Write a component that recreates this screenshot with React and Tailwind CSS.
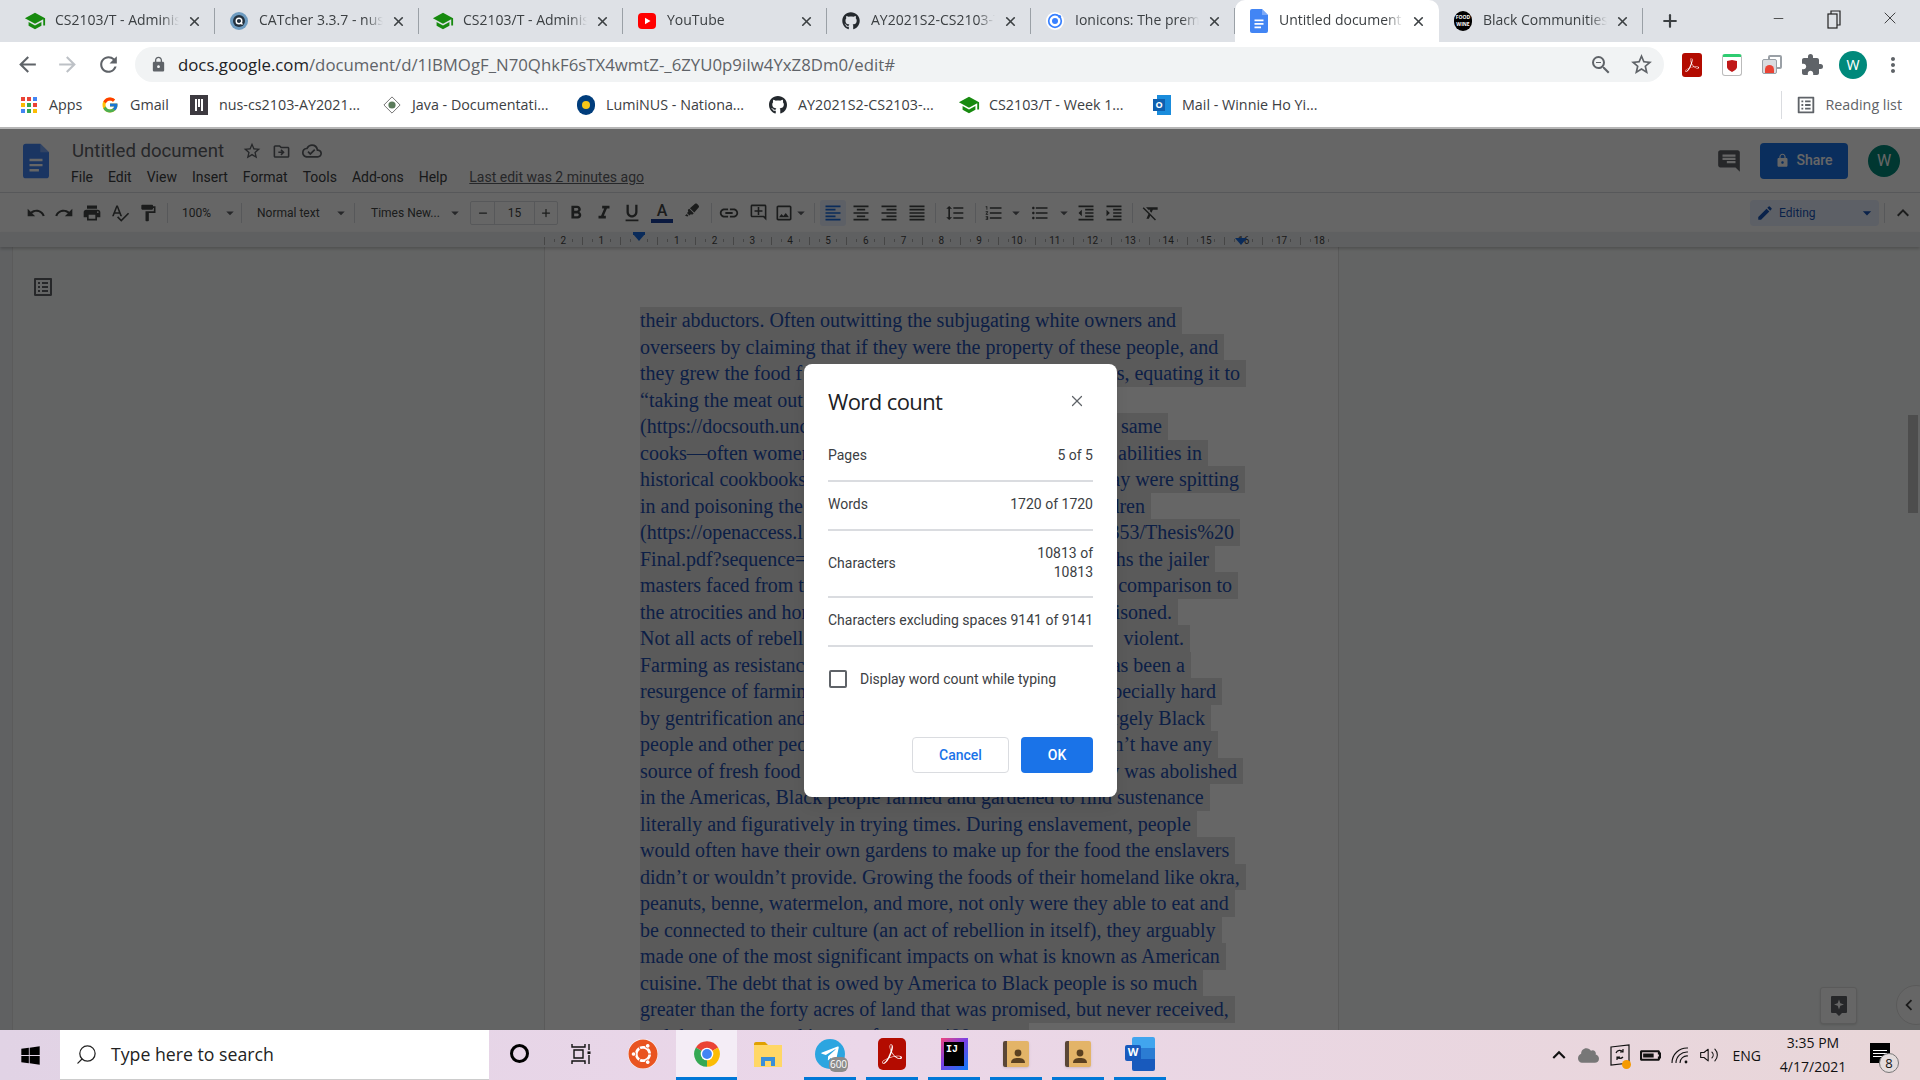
import { X, Plus, Minus, Search } from 'lucide-react'
import {
  MdArrowBack, MdArrowForward, MdRefresh, MdLock, MdZoomOut, MdStarBorder, MdExtension, MdMoreVert,
  MdUndo, MdRedo, MdPrint, MdSpellcheck, MdFormatPaint, MdFormatBold, MdFormatItalic, MdFormatUnderlined,
  MdInsertLink, MdOutlineAddComment, MdOutlineImage, MdFormatAlignLeft, MdFormatAlignCenter,
  MdFormatAlignRight, MdFormatAlignJustify, MdFormatLineSpacing, MdFormatListNumbered, MdFormatListBulleted,
  MdFormatIndentDecrease, MdFormatIndentIncrease, MdFormatClear, MdEdit, MdKeyboardArrowUp, MdKeyboardArrowLeft,
  MdChat, MdOutlineDriveFileMove, MdOutlineCloudDone, MdOutlineListAlt, MdSchool, MdArrowDropDown,
} from 'react-icons/md'
import { FaGithub, FaWindows, FaUbuntu, FaTelegramPlane, FaCloud, FaBatteryThreeQuarters, FaHighlighter } from 'react-icons/fa'
import { FcGoogle } from 'react-icons/fc'
import { SiAdobeacrobatreader } from 'react-icons/si'
import { FiVolume2 } from 'react-icons/fi'

const sans = "font-['Open_Sans',sans-serif]"
const roboto = "font-['Roboto',sans-serif]"

function DocsIcon({ className = 'w-[18px] h-[24px]', color = '#4285f4' }) {
  return (
    <svg viewBox="0 0 18 24" className={className}>
      <path d="M2 0h10l6 6v16a2 2 0 0 1-2 2H2a2 2 0 0 1-2-2V2a2 2 0 0 1 2-2z" fill={color} />
      <path d="M12 0l6 6h-6z" fill="#a1c2fa" opacity="0.6" />
      <path d="M4.5 10.5h9v1.7h-9zM4.5 14h9v1.7h-9zM4.5 17.5h6.5v1.7H4.5z" fill="#fff" />
    </svg>
  )
}

function Cap() {
  return <MdSchool size={22} className="text-[#178a0f] -mx-[2px]" />
}

function CatcherIcon() {
  return (
    <svg viewBox="0 0 18 18" className="w-[18px] h-[18px]">
      <circle cx="9" cy="9" r="9" fill="#6d9bc0" />
      <circle cx="9" cy="9" r="6" fill="#24323f" />
      <circle cx="9" cy="9" r="2.8" fill="none" stroke="#fff" strokeWidth="1.4" />
      <path d="M10.5 10.5l2 2" stroke="#fff" strokeWidth="1.4" />
    </svg>
  )
}

function YoutubeIcon() {
  return (
    <svg viewBox="0 0 18 18" className="w-[18px] h-[18px]">
      <rect x="0" y="1" width="18" height="16" rx="4" fill="#f00" />
      <path d="M7 5.7v6.6L12.5 9z" fill="#fff" />
    </svg>
  )
}

function IonIcon() {
  return (
    <svg viewBox="0 0 18 18" className="w-[18px] h-[18px]">
      <circle cx="9" cy="9" r="9" fill="#fff" />
      <circle cx="9" cy="9" r="6.3" fill="none" stroke="#3880ff" strokeWidth="1.7" />
      <circle cx="9" cy="9" r="3" fill="#3880ff" />
      <circle cx="13.6" cy="4.4" r="1.5" fill="#3880ff" />
    </svg>
  )
}

function BlackIcon() {
  return (
    <div className="w-[20px] h-[20px] rounded-full bg-black flex items-center justify-center text-white text-[5px] leading-[7px] font-bold text-center">
      FOOD<br />WINE
    </div>
  )
}

const tabs = [
  { icon: <Cap />, title: 'CS2103/T - Administrator' },
  { icon: <CatcherIcon />, title: 'CATcher 3.3.7 - nus-cs2103' },
  { icon: <Cap />, title: 'CS2103/T - Administrator' },
  { icon: <YoutubeIcon />, title: 'YouTube' },
  { icon: <FaGithub size={18} className="text-[#24292e]" />, title: 'AY2021S2-CS2103-T1' },
  { icon: <IonIcon />, title: 'Ionicons: The premium icon' },
  { icon: <DocsIcon />, title: 'Untitled document - Google', active: true },
  { icon: <BlackIcon />, title: 'Black Communities and Food' },
]

function Tab({ icon, title, active }) {
  return (
    <div className={`w-[204px] h-[42px] flex items-center pl-[15px] flex-none ${active ? 'bg-white rounded-t-[10px]' : ''}`}>
      <div className="w-[18px] flex justify-center flex-none">{icon}</div>
      <div className="ml-[11px] w-[124px] overflow-hidden whitespace-nowrap text-[14px] leading-[20px] -mt-[2px] text-[#3c4043] [mask-image:linear-gradient(to_right,black_86%,transparent)]">
        {title}
      </div>
      <X size={15} strokeWidth={2.6} className="ml-[8px] flex-none text-[#3c4043]" />
      {!active && <div className="ml-auto w-px h-[26px] bg-[#9aa0a6]" />}
    </div>
  )
}

function TabBar() {
  return (
    <div className={`h-[42px] bg-[#dee1e6] flex items-center pl-[11px] flex-none ${sans}`}>
      {tabs.map((t, i) => <Tab key={i} {...t} />)}
      <Plus size={20} strokeWidth={2.6} className="ml-[17px] text-[#3c4043]" />
      <div className="ml-auto flex items-center pr-[2px] text-[#222]">
        <div className="w-[56px] flex justify-center -mt-[6px]"><Minus size={15} strokeWidth={1.2} /></div>
        <div className="w-[56px] flex justify-center -mt-[4px]">
          <svg viewBox="0 0 14 19" className="w-[14px] h-[19px]" fill="none" stroke="#222" strokeWidth="1.2">
            <rect x="1" y="4" width="9" height="14" />
            <path d="M4 4V1h9v14h-3" />
          </svg>
        </div>
        <div className="w-[56px] flex justify-center -mt-[6px]"><X size={20} strokeWidth={1} /></div>
      </div>
    </div>
  )
}

function AddressBar() {
  return (
    <div className="h-[42px] pt-[3px] bg-white flex items-center flex-none">
      <div className="w-[54px] flex justify-end pr-[14px]"><MdArrowBack size={25} className="text-[#5f6368]" /></div>
      <div className="w-[27px] flex justify-center"><MdArrowForward size={25} className="text-[#bdc1c6]" /></div>
      <div className="w-[54px] flex justify-center"><MdRefresh size={25} className="text-[#5f6368]" /></div>
      <div className={`w-[1529px] h-[35px] rounded-full bg-[#f1f3f4] flex items-center pl-[15px] pr-[10px] ${sans}`}>
        <MdLock size={17} className="text-[#5f6368] flex-none" />
        <div className="ml-[11px] text-[16.8px] whitespace-nowrap text-[#5f6368]">
          <span className="text-[#202124]">docs.google.com</span>/document/d/1IBMOgF_N70QhkF6sTX4wmtZ-_6ZYU0p9iIw4YxZ8Dm0/edit#
        </div>
        <MdZoomOut size={24} className="ml-auto text-[#5f6368]" />
        <MdStarBorder size={25} className="ml-[16px] text-[#5f6368]" />
      </div>
      <div className="ml-[18px] w-[20px] h-[24px] bg-[#b30b00] rounded-[3px] flex items-center justify-center">
        <SiAdobeacrobatreader size={14} className="text-white" />
      </div>
      <div className="ml-[20px] w-[20px] h-[22px] rounded-[3px] border border-[#bbb] border-t-[3px] border-t-[#2ecc71] flex items-center justify-center">
        <svg viewBox="0 0 10 12" className="w-[10px] h-[12px]"><path d="M0 1l5-1 5 1v6c0 2-3 4-5 5-2-1-5-3-5-5z" fill="#c01818" /></svg>
      </div>
      <div className="ml-[20px] w-[20px] h-[20px] relative">
        <div className="w-[14px] h-[14px] ml-[6px] rounded-[2px] border-2 border-[#9aa0a6]" />
        <div className="absolute left-0 top-[4px] w-[15px] h-[15px] rounded-[2px] bg-[#dadce0] border border-[#9aa0a6]" />
        <div className="absolute left-[3px] top-[10px] w-[9px] h-[8px] rounded-t-full bg-[#ea4335]" />
      </div>
      <MdExtension size={24} className="ml-[18px] text-[#5f6368]" />
      <div className="ml-[15px] w-[28px] h-[28px] rounded-full bg-[#00897b] text-white flex items-center justify-center text-[14px]">W</div>
      <MdMoreVert size={24} className="ml-[14px] text-[#5f6368]" />
    </div>
  )
}

function AppsGrid() {
  const colors = ['#ea4335', '#ea4335', '#4285f4', '#fbbc05', '#34a853', '#ea4335', '#4285f4', '#34a853', '#fbbc05']
  return (
    <div className="grid grid-cols-3 gap-[2px] w-[16px] h-[16px] mx-px">
      {colors.map((c, i) => <div key={i} className="w-[4px] h-[4px]" style={{ background: c }} />)}
    </div>
  )
}

function OutlookIcon() {
  return (
    <div className="w-[20px] h-[20px] relative">
      <div className="absolute right-0 top-0 w-[14px] h-[20px] bg-[#1a8cdc]" />
      <div className="absolute left-0 top-[4px] w-[12px] h-[12px] bg-[#0f5fae] text-white text-[9px] font-bold flex items-center justify-center">O</div>
    </div>
  )
}

const bookmarks = [
  { w: 'w-[81px]', icon: <AppsGrid />, text: 'Apps' },
  { w: 'w-[89px]', icon: <FcGoogle size={18} />, text: 'Gmail' },
  { w: 'w-[193px]', icon: <div className="w-[20px] h-[20px] bg-[#3d3a40] flex items-start justify-center gap-px pt-[4px]"><div className="w-[2px] h-[12px] bg-white" /><div className="w-[2px] h-[8px] bg-white" /><div className="w-[2px] h-[12px] bg-white" /></div>, text: 'nus-cs2103-AY2021...' },
  { w: 'w-[194px]', icon: <svg viewBox="0 0 20 20" className="w-[20px] h-[20px]"><path d="M10 1l9 9-9 9-9-9z" fill="#fff" stroke="#666" /><circle cx="10" cy="10" r="4" fill="#5a7a5a" /></svg>, text: 'Java - Documentati...' },
  { w: 'w-[192px]', icon: <div className="w-[20px] h-[20px] rounded-full bg-[#003d7c] flex items-center justify-center"><div className="w-[8px] h-[8px] rounded-full bg-[#f5c518]" /></div>, text: 'LumiNUS - Nationa...' },
  { w: 'w-[191px]', icon: <FaGithub size={20} className="text-[#24292e]" />, text: 'AY2021S2-CS2103-...' },
  { w: 'w-[193px]', icon: <Cap />, text: 'CS2103/T - Week 1...' },
  { w: 'w-[200px]', icon: <OutlookIcon />, text: 'Mail - Winnie Ho Yi...' },
]

function BookmarkBar() {
  return (
    <div className={`h-[45px] bg-white flex items-center pl-[20px] flex-none border-b-2 border-[#b5b5b5] pb-[2px] ${sans}`}>
      {bookmarks.map((b, i) => (
        <div key={i} className={`${b.w} flex items-center gap-[11px] flex-none text-[14.3px] text-[#3c4043] whitespace-nowrap`}>
          <div className="w-[18px] flex justify-center flex-none">{b.icon}</div>
          {b.text}
        </div>
      ))}
      <div className="ml-auto flex items-center pr-[18px] text-[14.3px] text-[#5f6368]">
        <div className="w-px h-[28px] bg-[#dadce0] mr-[13px]" />
        <MdOutlineListAlt size={22} className="mr-[8px]" />
        Reading list
      </div>
    </div>
  )
}

function Tb({ icon: Icon, size = 20, className = 'ml-0', iconClass = 'text-[#444746]' }) {
  return (
    <div className={`w-[28px] h-[26px] flex items-center justify-center flex-none ${className}`}>
      <Icon size={size} className={iconClass} />
    </div>
  )
}

const Sep = ({ className = '' }) => <div className={`w-px h-[20px] bg-[#dadce0] flex-none ${className}`} />
const Caret = ({ className = '' }) => <MdArrowDropDown size={18} className={`text-[#5f6368] flex-none ${className}`} />

function DocsHeader() {
  return (
    <div className={`h-[64px] bg-white border-b border-[#dadce0] flex items-start flex-none relative ${roboto}`}>
      <div className="pl-[23px] pt-[14px]"><DocsIcon className="w-[26px] h-[36px]" color="#4285f4" /></div>
      <div className="pl-[23px] pt-[9px]">
        <div className="flex items-center h-[26px]">
          <span className="text-[18.6px] text-[#5f6368] leading-none">Untitled document</span>
          <MdStarBorder size={20} className="ml-[18px] text-[#5f6368]" />
          <MdOutlineDriveFileMove size={19} className="ml-[10px] text-[#5f6368]" />
          <MdOutlineCloudDone size={20} className="ml-[11px] text-[#5f6368]" />
        </div>
        <div className="flex items-center h-[26px] text-[14px] text-[#3c4043] whitespace-nowrap">
          <span className="-ml-px">File</span>
          <span className="ml-[15px]">Edit</span>
          <span className="ml-[15px]">View</span>
          <span className="ml-[15px]">Insert</span>
          <span className="ml-[15px]">Format</span>
          <span className="ml-[15px]">Tools</span>
          <span className="ml-[15px]">Add-ons</span>
          <span className="ml-[15px]">Help</span>
          <span className="ml-[22px] underline text-[#5f6368]">Last edit was 2 minutes ago</span>
        </div>
      </div>
      <div className="ml-auto flex items-center h-full pr-[20px]">
        <MdChat size={26} className="text-[#5f6368] mr-[18px] -scale-x-100" />
        <div className="w-[88px] h-[36px] rounded-[4px] bg-[#1a73e8] text-white flex items-center justify-center gap-[6px] text-[14px] font-medium">
          <MdLock size={15} />Share
        </div>
        <div className="ml-[20px] w-[32px] h-[32px] rounded-full bg-[#00897b] text-white flex items-center justify-center text-[16px]">W</div>
      </div>
    </div>
  )
}

function DocsToolbar() {
  return (
    <div className={`h-[39px] bg-white flex items-center pl-[22px] flex-none text-[12px] text-[#444746] whitespace-nowrap ${roboto}`}>
      <Tb icon={MdUndo} /><Tb icon={MdRedo} /><Tb icon={MdPrint} /><Tb icon={MdSpellcheck} /><Tb icon={MdFormatPaint} />
      <Sep className="ml-[5px]" />
      <div className="w-[73px] flex items-center pl-[14px] flex-none">100%<Caret className="ml-[10px]" /></div>
      <Sep />
      <div className="w-[112px] flex items-center pl-[15px] flex-none">Normal text<Caret className="ml-[12px]" /></div>
      <Sep />
      <div className="w-[115px] flex items-center pl-[16px] flex-none">Times New...<Caret className="ml-[6px]" /></div>
      <div className="w-[88px] h-[24px] border border-[#dadce0] rounded-[2px] flex items-center flex-none">
        <div className="w-[23px] flex justify-center"><Minus size={12} strokeWidth={2.5} /></div>
        <div className="w-[41px] h-full border-x border-[#dadce0] flex items-center justify-center">15</div>
        <div className="flex-1 flex justify-center"><Plus size={12} strokeWidth={2.5} /></div>
      </div>
      <Tb icon={MdFormatBold} size={22} className="ml-[4px]" />
      <Tb icon={MdFormatItalic} size={22} />
      <Tb icon={MdFormatUnderlined} size={22} />
      <div className="ml-[2px] w-[28px] h-[26px] flex flex-col items-center justify-center flex-none">
        <span className="text-[16px] leading-[17px] font-medium">A</span>
        <div className="w-[22px] h-[4px] bg-[#1a3f9e]" />
      </div>
      <Tb icon={FaHighlighter} size={14} className="ml-[2px] -mt-[6px]" />
      <Sep className="ml-[5px]" />
      <Tb icon={MdInsertLink} size={22} className="ml-[3px]" />
      <Tb icon={MdOutlineAddComment} size={19} className="ml-px" />
      <div className="w-[24px] flex justify-center flex-none"><MdOutlineImage size={20} /></div>
      <Caret className="-mx-[4px]" />
      <Sep className="ml-[8px]" />
      <div className="ml-[5px] w-[26px] h-[26px] rounded-[3px] bg-[#e8f0fe] flex items-center justify-center flex-none"><MdFormatAlignLeft size={20} className="text-[#1a6be0]" /></div>
      <Tb icon={MdFormatAlignCenter} className="ml-px" /><Tb icon={MdFormatAlignRight} /><Tb icon={MdFormatAlignJustify} />
      <Sep className="ml-[4px]" />
      <Tb icon={MdFormatLineSpacing} className="ml-[5px]" />
      <Sep className="ml-[6px]" />
      <Tb icon={MdFormatListNumbered} className="ml-[4px]" /><Caret className="-ml-[1px]" />
      <Tb icon={MdFormatListBulleted} className="ml-[1px]" /><Caret className="ml-[1px]" />
      <Tb icon={MdFormatIndentDecrease} className="-ml-[1px]" /><Tb icon={MdFormatIndentIncrease} />
      <Sep className="ml-[4px]" />
      <Tb icon={MdFormatClear} className="ml-[4px]" />
      <div className="ml-auto flex items-center pr-[4px]">
        <div className="w-[129px] h-[26px] rounded-[4px] bg-[#e8f0fe] flex items-center pl-[6px] pr-[2px] text-[#1a56b8]">
          <MdEdit size={18} /><span className="ml-[5px]">Editing</span>
          <MdArrowDropDown size={20} className="ml-auto" />
        </div>
        <Sep className="ml-[5px]" />
        <MdKeyboardArrowUp size={24} className="ml-[6px] mr-[1px]" />
      </div>
    </div>
  )
}

const rulerNums = ['2', '1', '', '1', '2', '3', '4', '5', '6', '7', '8', '9', '10', '11', '12', '13', '14', '15', '16', '17', '18']

function Ruler() {
  return (
    <div className={`h-[15px] pt-[2px] bg-[#eef0f3] flex-none pl-[544px] flex items-center relative shadow-[0_2px_3px_rgba(0,0,0,0.2)] z-10 ${roboto}`}>
      {rulerNums.map((n, i) => (
        <div key={i} className="w-[37.8px] flex-none flex items-center justify-between text-[10px] text-[#444] leading-none border-l border-[#b0b0b0] h-[8px]">
          <div className="w-px h-[3px] bg-[#b0b0b0] ml-[9px]" />
          <span>{n}</span>
          <div className="w-px h-[3px] bg-[#b0b0b0] mr-[9px]" />
        </div>
      ))}
      <div className="absolute left-[633px] top-[2px] w-0 h-0 border-x-[6px] border-x-transparent border-t-[7px] border-t-[#1a6be0]" />
      <div className="absolute left-[633px] top-0 w-[12px] h-[3px] bg-[#1a6be0]" />
      <div className="absolute left-[1235px] top-[6px] w-0 h-0 border-x-[6px] border-x-transparent border-t-[7px] border-t-[#1a6be0]" />
    </div>
  )
}

const lines = [
  { t: 'their abductors. Often outwitting the subjugating white owners and' },
  { t: 'overseers by claiming that if they were the property of these people, and' },
  { t: 'they grew the food f', r: 's, equating it to', w: 606 },
  { t: '“taking the meat out', r: '', w: 300 },
  { t: '(https://docsouth.unc', r: 'same', w: 528 },
  { t: 'cooks—often women', r: 'abilities in', w: 568 },
  { t: 'historical cookbooks', r: 'ay were spitting', w: 605 },
  { t: 'in and poisoning the', r: 'dren', w: 511 },
  { t: '(https://openaccess.l', r: '353/Thesis%20', w: 600 },
  { t: 'Final.pdf?sequence=', r: 'hs the jailer', w: 575 },
  { t: 'masters faced from t', r: 'comparison to', w: 598 },
  { t: 'the atrocities and hor', r: 'isoned.', w: 538 },
  { t: 'Not all acts of rebell', r: 'violent.', w: 550 },
  { t: 'Farming as resistanc', r: 'as been a', w: 551 },
  { t: 'resurgence of farmin', r: 'pecially hard', w: 582 },
  { t: 'by gentrification and', r: 'rgely Black', w: 571 },
  { t: 'people and other peo', r: 'n’t have any', w: 578 },
  { t: 'source of fresh food', r: 'y was abolished', w: 603 },
  { t: 'in the Americas, Black people farmed and gardened to find sustenance' },
  { t: 'literally and figuratively in trying times. During enslavement, people' },
  { t: 'would often have their own gardens to make up for the food the enslavers' },
  { t: 'didn’t or wouldn’t provide. Growing the foods of their homeland like okra,' },
  { t: 'peanuts, benne, watermelon, and more, not only were they able to eat and' },
  { t: 'be connected to their culture (an act of rebellion in itself), they arguably' },
  { t: 'made one of the most significant impacts on what is known as American' },
  { t: 'cuisine. The debt that is owed by America to Black people is so much' },
  { t: 'greater than the forty acres of land that was promised, but never received,' },
  { t: 'and that has accrued interest for over 400 years.' },
]

function Canvas() {
  return (
    <div className="flex-1 min-h-0 flex bg-[#f8fbfa] overflow-hidden relative">
      <div className="w-[13px] flex-none bg-[#eff2f6] border-r border-[#e4e4e4]" />
      <div className="w-[531px] flex-none pt-[28px] pl-[18px]">
        <MdOutlineListAlt size={24} className="text-[#5f6368]" />
      </div>
      <div className="w-[795px] flex-none bg-white border-x border-[#e0e0e0] pl-[95px] pt-[60px] font-['Liberation_Serif',serif] text-[20px] leading-[26.5px] text-[#1f4fb0] whitespace-nowrap">
        {lines.map((l, i) => (
          <div key={i} className="h-[26.5px]">
            {l.r === undefined ? (
              <span className="inline-block bg-[#e0e0e0] pr-[6px] h-[26.5px]">{l.t}</span>
            ) : (
              <span className="inline-flex justify-between bg-[#e0e0e0] pr-[6px] h-[26.5px]" style={{ width: l.w }}>
                <span>{l.t}</span><span>{l.r}</span>
              </span>
            )}
          </div>
        ))}
      </div>
      <div className="absolute right-[2px] top-[168px] w-[10px] h-[98px] bg-[#c1c1c1]" />
      <div className="absolute left-[1820px] top-[740px] w-[37px] h-[37px] rounded-[3px] border border-[#e0e0e0] bg-white shadow-sm flex items-center justify-center">
        <svg viewBox="0 0 18 22" className="w-[18px] h-[22px]">
          <path d="M2 1h14a1 1 0 0 1 1 1v15a1 1 0 0 1-1 1h-4l-3 3-3-3H2a1 1 0 0 1-1-1V2a1 1 0 0 1 1-1z" fill="#5f6368" />
          <path d="M9 4.5l1.3 3.7L14 9.5l-3.7 1.3L9 14.5l-1.3-3.7L4 9.5l3.7-1.3z" fill="#fff" />
        </svg>
      </div>
      <div className="absolute left-[1896px] top-[738px] w-[40px] h-[40px] rounded-full bg-white border border-[#e0e0e0] flex items-center pl-[1px]">
        <MdKeyboardArrowLeft size={22} className="text-[#444]" />
      </div>
    </div>
  )
}

function CountRow({ label, children, pb = 'pb-[15px]' }) {
  return (
    <div className={`flex items-center justify-between pt-[13px] ${pb} border-b-2 border-[#dadce0] leading-[19px] whitespace-nowrap`}>
      <span>{label}</span>
      {children}
    </div>
  )
}

function WordCountDialog() {
  return (
    <div className={`absolute left-[804px] top-[235px] w-[313px] h-[433px] bg-white rounded-[8px] px-[24px] pt-[24px] text-[14px] text-[#3c4043] shadow-lg ${roboto}`}>
      <div className="flex items-center justify-between h-[28px] mb-[17px]">
        <span className="text-[22px] text-[#202124] font-['Open_Sans',sans-serif] tracking-[-0.6px] -mt-[2px]">Word count</span>
        <X size={18} strokeWidth={1.6} className="text-[#5f6368] mr-[7px] -mt-[2px]" />
      </div>
      <CountRow label="Pages"><span>5 of 5</span></CountRow>
      <CountRow label="Words"><span>1720 of 1720</span></CountRow>
      <CountRow label="Characters" pb="pb-[14px]"><span className="w-[70px] text-right whitespace-normal">10813 of 10813</span></CountRow>
      <CountRow label="Characters excluding spaces 9141 of 9141" />
      <div className="mt-[23px] flex items-center h-[18px]">
        <div className="w-[18px] h-[18px] ml-px border-2 border-[#5f6368] rounded-[2px]" />
        <span className="ml-[13px]">Display word count while typing</span>
      </div>
      <div className="mt-[49px] flex justify-end gap-[12px] font-medium">
        <div className="w-[97px] h-[36px] rounded-[4px] border border-[#dadce0] text-[#1a73e8] flex items-center justify-center">Cancel</div>
        <div className="w-[72px] h-[36px] rounded-[4px] bg-[#1a73e8] text-white flex items-center justify-center">OK</div>
      </div>
    </div>
  )
}

function ChromeLogo() {
  return (
    <svg viewBox="0 0 24 24" className="w-[28px] h-[28px]">
      <path d="M12 12L2.47 6.5A11 11 0 0 1 21.53 6.5z" fill="#ea4335" />
      <path d="M12 12L21.53 6.5A11 11 0 0 1 12 23z" fill="#fbbc05" />
      <path d="M12 12L12 23A11 11 0 0 1 2.47 6.5z" fill="#34a853" />
      <circle cx="12" cy="12" r="5.4" fill="#fff" />
      <circle cx="12" cy="12" r="4.2" fill="#4285f4" />
    </svg>
  )
}

function FolderLogo() {
  return (
    <svg viewBox="0 0 28 26" className="w-[28px] h-[26px]">
      <path d="M0 3a2 2 0 0 1 2-2h9l3 3H0z" fill="#e0a100" />
      <rect x="0" y="4" width="28" height="22" fill="#ffd766" />
      <path d="M7 25v-9h14v9h-4v-5h-6v5z" fill="#3a8fd8" />
    </svg>
  )
}

function ContactsLogo() {
  return (
    <div className="w-[26px] h-[26px] rounded-[2px] bg-[#e3b468] border-l-[4px] border-[#5a4636] flex items-end justify-center shadow-sm">
      <svg viewBox="0 0 16 16" className="w-[16px] h-[16px] mb-[3px]"><circle cx="8" cy="5" r="3.4" fill="#5a4020" /><path d="M1 15c0-4 3-5 7-5s7 1 7 5z" fill="#5a4020" /></svg>
    </div>
  )
}

const apps = [
  { w: 'w-[61px]', icon: <div className="w-[19px] h-[19px] rounded-full border-[3px] border-black" /> },
  { w: 'w-[61px]', icon: <svg viewBox="0 0 20 22" className="w-[20px] h-[22px]"><path d="M1 1v3h13V1M1 21v-3h13v3M3 7h9v8H3zM18 1v6M18 12v9" fill="none" stroke="#111" strokeWidth="1.4" /><rect x="16.5" y="8.4" width="3" height="2.6" fill="#111" /></svg> },
  { w: 'w-[65px]', icon: <div className="w-[30px] h-[30px] rounded-full bg-white flex items-center justify-center -ml-[2px]"><FaUbuntu size={30} className="text-[#e95420]" /></div> },
  { w: 'w-[61px]', active: true, open: true, icon: <ChromeLogo /> },
  { w: 'w-[62px]', icon: <FolderLogo /> },
  { w: 'w-[62px]', open: true, icon: (
    <div className="w-[30px] h-[30px] rounded-full bg-[#2ca5e0] flex items-center justify-center relative">
      <FaTelegramPlane size={20} className="text-white" />
      <div className="absolute -right-[3px] -bottom-[3px] w-[19px] h-[15px] rounded-[6px] bg-[#8b8b8b] text-white text-[10px] leading-[15px] text-center">600</div>
    </div>
  ) },
  { w: 'w-[62px]', open: true, icon: <div className="w-[28px] h-[32px] rounded-[5px] bg-[#b30b00] flex items-center justify-center"><SiAdobeacrobatreader size={20} className="text-white" /></div> },
  { w: 'w-[62px]', open: true, icon: (
    <div className="w-[27px] h-[32px] bg-[linear-gradient(135deg,#f0457b,#7b3fe4_45%,#087cfa)] flex items-center justify-center">
      <div className="w-[20px] h-[24px] bg-black text-white text-[10px] leading-[12px] font-bold pl-[2px] pt-[2px] font-['Liberation_Mono',monospace]">IJ</div>
    </div>
  ) },
  { w: 'w-[62px]', open: true, icon: <ContactsLogo /> },
  { w: 'w-[62px]', open: true, icon: <ContactsLogo /> },
  { w: 'w-[62px]', open: true, icon: (
    <div className="w-[30px] h-[34px] relative">
      <div className="absolute right-0 top-0 w-[23px] h-full rounded-[2px] bg-[linear-gradient(#41a5ee_33%,#2b7cd3_33%,#2b7cd3_66%,#185abd_66%)]" />
      <div className="absolute left-0 top-[8px] w-[16px] h-[16px] rounded-[2px] bg-[#185abd] text-white text-[11px] font-bold flex items-center justify-center">W</div>
    </div>
  ) },
]

function SyncIcon() {
  return (
    <div className="w-[20px] h-[22px] relative mr-[10px]">
      <svg viewBox="0 0 20 22" className="w-[20px] h-[22px]" fill="none" stroke="#111" strokeWidth="1.2">
        <path d="M1 3l18-2v18l-18 2z" />
        <path d="M6 9a4 4 0 0 1 7-1M13 13a4 4 0 0 1-6 0M13 5v3h-3M7 16v-3h3" />
      </svg>
      <div className="absolute -right-[1px] -bottom-[3px] w-[9px] h-[9px] rounded-full bg-[#f59a00]" />
    </div>
  )
}

function WifiIcon() {
  return (
    <svg viewBox="0 0 20 20" className="w-[20px] h-[20px] mr-[9px]" fill="none" stroke="#111" strokeWidth="1.1">
      <path d="M2 18A15 15 0 0 1 18 3M6 18A11 11 0 0 1 18 7M10 18A7 7 0 0 1 18 11" />
      <circle cx="16" cy="17" r="1.4" fill="#111" stroke="none" />
    </svg>
  )
}

function Taskbar() {
  return (
    <div className="h-[50px] flex-none flex items-stretch bg-[linear-gradient(to_right,#e1d3e5,#ebd7e9_45%,#e8d6d8)] font-['Open_Sans',sans-serif]">
      <div className="w-[60px] flex items-center justify-center"><FaWindows size={21} className="text-black" /></div>
      <div className="w-[429px] bg-white border-b border-[#ccc] flex items-center pl-[15px] text-[17.7px] text-[#222]">
        <Search size={23} strokeWidth={1.3} className="-scale-x-100 mr-[13px]" />
        Type here to search
      </div>
      {apps.map((a, i) => (
        <div key={i} className={`${a.w} flex-none flex flex-col ${a.active ? 'bg-[#f4edf6]' : ''}`}>
          <div className="flex-1 flex items-center justify-center">{a.icon}</div>
          <div className={`h-[3px] ${a.active ? '' : 'mx-[5px]'} ${a.open ? 'bg-[#0078d7]' : ''}`} />
        </div>
      ))}
      <div className="ml-auto flex items-center text-[#111]">
        <MdKeyboardArrowUp size={26} className="mr-[6px]" />
        <FaCloud size={21} className="text-[#777] mr-[11px]" />
        <SyncIcon />
        <FaBatteryThreeQuarters size={21} className="mr-[9px]" />
        <WifiIcon />
        <FiVolume2 size={20} strokeWidth={1.3} className="mr-[14px]" />
        <span className="text-[14px] mr-[17px]">ENG</span>
        <div className="w-[70px] text-[14px] leading-[24px] text-center mr-[22px]">
          3:35 PM<br />4/17/2021
        </div>
        <div className="w-[22px] h-[24px] relative mr-[28px]">
          <div className="w-[20px] h-[20px] bg-black flex flex-col justify-center gap-[2px] px-[3px]">
            <div className="h-px bg-white" /><div className="h-px bg-white" /><div className="h-px bg-white" />
          </div>
          <div className="absolute left-[9px] top-[10px] w-[20px] h-[20px] rounded-full bg-[#e4dcdc] border border-[#777] text-[13px] leading-[18px] text-center">8</div>
        </div>
      </div>
    </div>
  )
}

export default function App() {
  return (
    <div className="w-[1920px] h-[1080px] overflow-hidden flex flex-col bg-white">
      <TabBar />
      <AddressBar />
      <BookmarkBar />
      <div className="flex-1 min-h-0 flex flex-col relative overflow-hidden">
        <DocsHeader />
        <DocsToolbar />
        <Ruler />
        <Canvas />
        <div className="absolute inset-0 bg-black/60 z-20" />
        <div className="z-30"><WordCountDialog /></div>
      </div>
      <Taskbar />
    </div>
  )
}
